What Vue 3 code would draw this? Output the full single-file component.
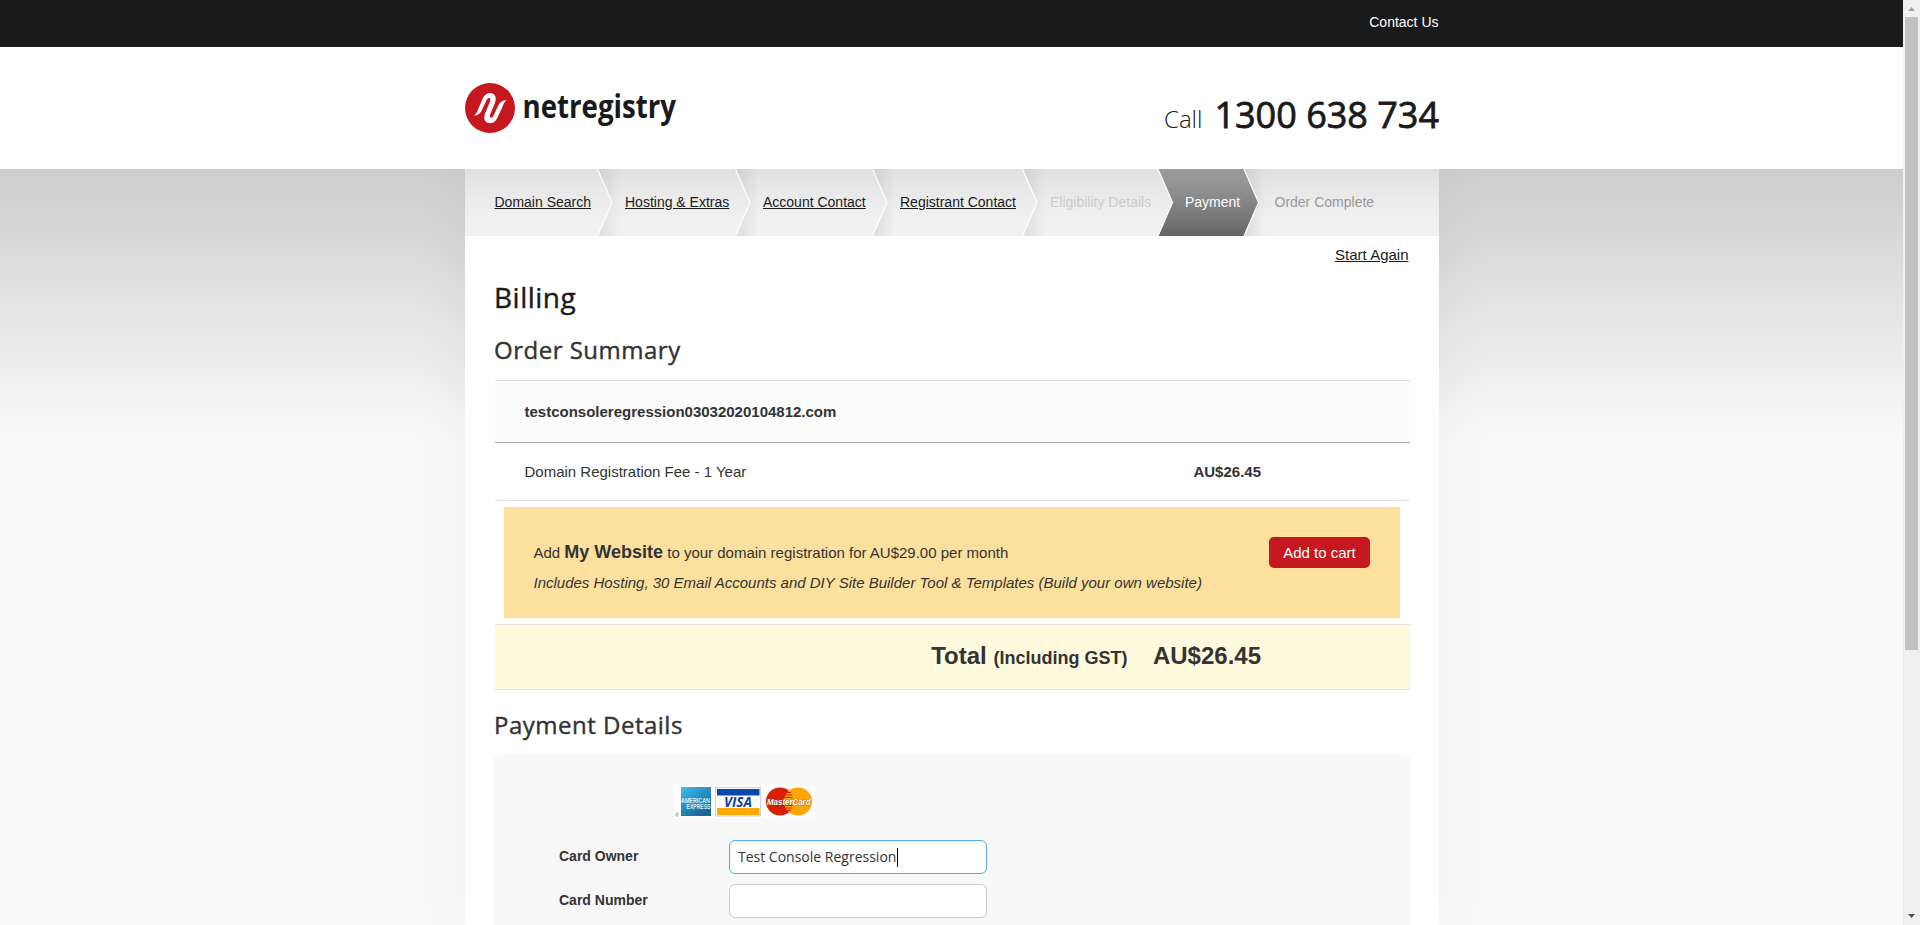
<script setup>
const steps = [
  { label: 'Domain Search', state: 'link', w: 130.5 },
  { label: 'Hosting & Extras', state: 'link', w: 138 },
  { label: 'Account Contact', state: 'link', w: 137 },
  { label: 'Registrant Contact', state: 'link', w: 150 },
  { label: 'Eligibility Details', state: 'off', w: 135 },
  { label: 'Payment', state: 'current', w: 89.5 },
  { label: 'Order Complete', state: 'next', w: 110 }
]
const dividers = [132.5, 270.5, 407.5, 557.5, 693, 779]
const fields = [
  { label: 'Card Owner', value: 'Test Console Regression', focus: true },
  { label: 'Card Number', value: '', focus: false }
]
</script>

<template>
  <div class="page">
    <div class="view">
      <div class="topbar"><div class="inner"><a class="contact">Contact Us</a></div></div>
      <header class="header">
        <div class="inner head-row">
          <svg class="logo" width="220" height="60" viewBox="0 0 220 60">
            <circle cx="25" cy="30" r="25" fill="#c6161f" />
            <path d="M8.3 37.6C11 37 12 34 13.2 31.2L17.6 20.8C21 12 33 13.5 30.4 23.4C29.6 26.5 26 34 25 37.2C24.2 40 27.2 40.4 28.3 38L33.5 27C35 23.8 37.5 22.3 41.7 22C39.2 24 38.4 26.5 37.4 29L32.6 39.5C28.8 48.5 17.6 46.5 19.4 37.6C20 34.8 24.5 25.5 25.4 22.2C26 19.6 22.8 19.2 21.8 21.6L17.2 31.4C15.4 35.4 13 37.6 8.3 37.6Z" fill="#fff" />
            <text class="wordmark" x="57.5" y="39.8" textLength="153.5" lengthAdjust="spacingAndGlyphs">netregistry</text>
          </svg>
          <div class="phone"><span class="call">Call</span><span class="number">1300 638 734</span></div>
        </div>
      </header>
      <main class="content">
        <nav class="steps">
          <svg class="chevrons" width="974" height="67" viewBox="0 0 974 67">
            <defs>
              <linearGradient id="dark" x1="0" y1="0" x2="0" y2="1">
                <stop offset="0" stop-color="#9a9a9a" /><stop offset=".25" stop-color="#949494" /><stop offset="1" stop-color="#656565" />
              </linearGradient>
              <linearGradient id="shade" x1="0" y1="0" x2="1" y2="0">
                <stop offset="0" stop-color="#000" stop-opacity=".08" /><stop offset="1" stop-color="#000" stop-opacity="0" />
              </linearGradient>
            </defs>
            <path v-for="d in dividers" :key="'s' + d" :d="`M${d} 0L${d + 14.5} 33.5L${d} 67H${d + 23}V0Z`" fill="url(#shade)" />
            <path d="M693 0H779L793.5 33.5L779 67H693L707.5 33.5Z" fill="url(#dark)" />
            <path v-for="d in dividers" :key="d" :d="`M${d} 0L${d + 14.5} 33.5L${d} 67`" fill="none" stroke="#fff" stroke-width="1.2" />
          </svg>
          <div v-for="s in steps" :key="s.label" class="step" :class="s.state" :style="{ width: s.w + 'px' }"><span>{{ s.label }}</span></div>
        </nav>
        <div class="again"><a>Start Again</a></div>
        <h1>Billing</h1>
        <h2 class="summary">Order Summary</h2>
        <section class="order">
          <div class="domain"><b>testconsoleregression03032020104812.com</b></div>
          <div class="fee"><span class="feename">Domain Registration Fee - 1 Year</span><b class="price">AU$26.45</b></div>
          <div class="promo">
            <div>
              <p class="offer">Add <b>My Website</b> to your domain registration for AU$29.00 per month</p>
              <p class="includes">Includes Hosting, 30 Email Accounts and DIY Site Builder Tool &amp; Templates (Build your own website)</p>
            </div>
            <button>Add to cart</button>
          </div>
          <div class="total"><span class="tlabel">Total <small>(Including GST)</small></span><span class="tprice">AU$26.45</span></div>
        </section>
        <h2 class="details">Payment Details</h2>
        <section class="panel">
          <svg class="cards" width="141" height="33" viewBox="0 0 141 33">
            <defs>
              <linearGradient id="amex" x1="0" y1="0" x2=".7" y2="1">
                <stop offset="0" stop-color="#43bdf5" /><stop offset=".45" stop-color="#2b93c8" /><stop offset="1" stop-color="#176592" />
              </linearGradient>
              <clipPath id="mc"><circle cx="124" cy="16.5" r="14" /></clipPath>
            </defs>
            <rect width="141" height="33" fill="#fff" />
            <rect x="7" y="2" width="30" height="29" fill="url(#amex)" />
            <text class="ax" x="7" y="17.6" textLength="29" lengthAdjust="spacingAndGlyphs">AMERICAN</text>
            <text class="ax" x="12.5" y="23.8" textLength="24" lengthAdjust="spacingAndGlyphs">EXPRESS</text>
            <text class="reg" x="1" y="31.5">®</text>
            <rect x="41.5" y="2.5" width="45" height="28.5" fill="#fff" stroke="#cdd0e8" />
            <rect x="43" y="4" width="42.5" height="6.5" fill="#0648ad" />
            <rect x="43" y="23" width="42.5" height="7" fill="#ffa800" />
            <text class="visa" x="50" y="21.6" textLength="28" lengthAdjust="spacingAndGlyphs">VISA</text>
            <circle cx="106" cy="16.5" r="14" fill="#d81e05" />
            <circle cx="124" cy="16.5" r="14" fill="#ffa500" />
            <path d="M111 7.5h6M111 10h7M110.5 12.5h8M110.5 20.5h8M111 23h7M111 25.5h6" stroke="#d81e05" stroke-width="1.2" clip-path="url(#mc)" />
            <text class="master" x="93" y="20.2" textLength="43.5" lengthAdjust="spacingAndGlyphs">MasterCard</text>
          </svg>
          <div v-for="f in fields" :key="f.label" class="field">
            <label>{{ f.label }}</label>
            <div class="input" :class="{ focus: f.focus }"><span>{{ f.value }}</span><i v-if="f.focus" class="caret"></i></div>
          </div>
        </section>
      </main>
    </div>
    <aside class="scrollbar">
      <svg width="17" height="17"><path d="M5 11L8.5 7L12 11Z" fill="#a3a3a3" /></svg>
      <div class="thumb"></div>
      <svg width="17" height="17"><path d="M5 6L8.5 10L12 6Z" fill="#505050" /></svg>
    </aside>
  </div>
</template>

<style>
html, body { margin: 0; overflow: hidden; }
</style>

<style scoped>
.page { display: flex; width: 1920px; height: 925px; overflow: hidden; font: 15px/20px "Liberation Sans", Arial, sans-serif; color: #333; }
.page * { box-sizing: border-box; }
.view { width: 1903px; height: 925px; overflow: hidden; background: linear-gradient(#cdcdcd 169px, #fafafa 440px); }
.inner { width: 974px; margin-left: 465px; }
.topbar { height: 47px; background: #1a1a1a; position: relative; }
.contact { display: block; padding-right: .5px; text-align: right; font-size: 14px; line-height: 44px; color: #fff; }
.header { height: 122px; background: #fff; position: relative; }
.head-row { display: flex; justify-content: space-between; }
.logo { margin-top: 31px; overflow: visible; }
.wordmark { font: 700 31.5px "Open Sans", sans-serif; fill: #1a1a1a; }
.phone { display: flex; align-items: baseline; margin-top: 43px; height: 50px; line-height: 50px; font-family: "Open Sans", sans-serif; color: #1a1a1a; white-space: nowrap; }
.call { font-size: 24px; font-weight: 300; margin-right: 12px; }
.number { font-size: 36px; font-weight: 400; -webkit-text-stroke: .8px #1a1a1a; }
.content { width: 974px; height: 756px; margin-left: 465px; background: #fff; box-shadow: 0 0 60px rgba(0, 0, 0, .05); }
.header, .topbar { z-index: 1; }
.steps { position: relative; display: flex; height: 67px; padding-left: 29.5px; background: linear-gradient(#e1e1e1, #ececec 50%, #f1f1f1 80%, #f0f0f0); font-size: 14px; line-height: 66px; white-space: nowrap; }
.chevrons { position: absolute; left: 0; top: 0; }
.step { position: relative; flex: none; }
.link span { text-decoration: underline; color: #1a1a1a; }
.off { color: #ccc; }
.current { color: #fff; }
.next { color: #999; }
.again { height: 37px; padding-right: 30.5px; text-align: right; line-height: 38px; color: #1a1a1a; }
.again a { text-decoration: underline; }
h1, h2 { margin: 0 0 0 29px; font-family: "Open Sans", sans-serif; font-weight: 400; letter-spacing: .5px; -webkit-text-stroke: .4px currentColor; }
h1 { font-size: 28px; line-height: 48px; height: 49px; color: #1a1a1a; }
h2 { font-size: 24px; line-height: 40px; }
.summary { height: 58px; padding-top: 8px; }
.order { width: 915px; margin-left: 30px; }
.domain { height: 63px; border-top: 1px solid #e2e2e2; border-bottom: 1px solid #aaa; background: #fbfbfb; padding-left: 29.5px; line-height: 62px; }
.fee { display: flex; justify-content: space-between; height: 58px; padding: 0 149px 0 29.5px; line-height: 58px; border-bottom: 1px solid #e2e2e2; }
.promo { display: flex; justify-content: space-between; align-items: flex-start; margin: 6px 10px 6px 9px; height: 111px; padding: 30px 30px 30px 29.5px; background: #fee09e; white-space: nowrap; }
.promo p { margin: 0; line-height: 30px; }
.offer b { font-size: 18px; }
.includes { font-style: italic; }
button { width: 101px; height: 31px; padding: 0; border: 0; border-radius: 5px; background: #c6181f; color: #fff; font: 15px/31px "Liberation Sans", Arial, sans-serif; }
.total { display: flex; justify-content: flex-end; height: 66px; padding-right: 149px; border: solid #e2e2e2; border-width: 1px 0; background: #fffadd; font-size: 24px; font-weight: 700; line-height: 62px; }
.total small { font-size: 18px; }
.tprice { margin-left: 25.5px; }
.details { height: 65px; padding-top: 15px; }
.panel { width: 916px; height: 190px; margin-left: 29px; padding: 30px 0 0 65px; border-radius: 5px 5px 0 0; background: #f8f8f8; }
.cards { display: block; margin: 0 0 22px 115px; overflow: visible; }
.ax { font: 700 6.5px "Liberation Sans", sans-serif; fill: #d9f1fb; }
.reg { font: 5px "Liberation Sans", sans-serif; fill: #176592; }
.visa { font: italic 700 14px "Open Sans", sans-serif; fill: #0b3fa0; }
.master { font: italic 700 9.5px "Liberation Sans", sans-serif; fill: #fff; stroke: #7a2a10; stroke-width: .5px; paint-order: stroke; }
.field { display: flex; height: 34px; margin-bottom: 10px; }
label { width: 170px; font-size: 14px; font-weight: 700; line-height: 32px; }
.input { display: flex; align-items: center; width: 258px; height: 34px; padding-left: 8px; border: 1px solid #ccc; border-radius: 6px; background: #fff; font: 14px/32px "Open Sans", sans-serif; color: #333; }
.focus { border-color: #58ade8; box-shadow: inset 0 2px 4px rgba(0, 0, 0, .06); }
.caret { width: 1px; height: 19px; margin-left: 1px; background: #000; }
.scrollbar { width: 17px; height: 925px; background: #f0f0f0; display: flex; flex-direction: column; }
.scrollbar svg { flex: none; }
.thumb { flex: none; width: 13px; height: 633px; margin: 0 2px 258px; background: #c1c1c1; }
</style>
